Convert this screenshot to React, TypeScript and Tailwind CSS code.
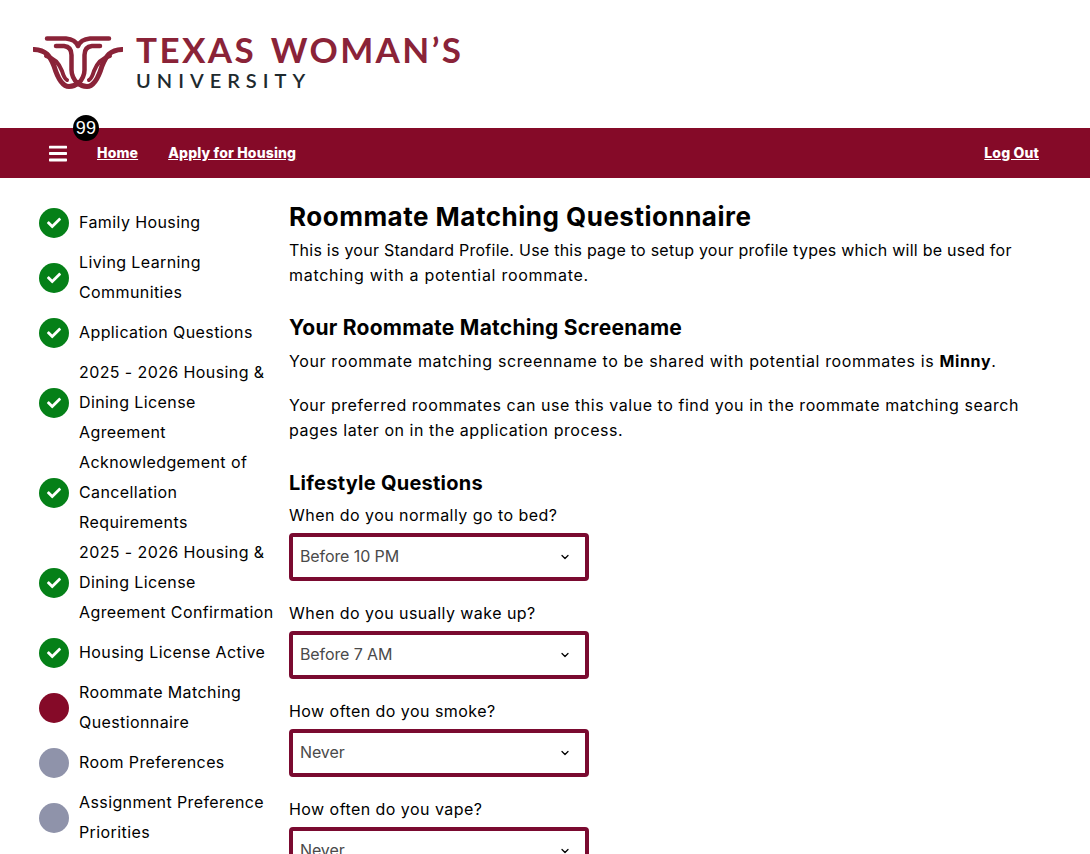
import { ChevronDown } from 'lucide-react';
import { FaBars, FaCheck } from 'react-icons/fa';

interface StepProps {
  label: string[];
  status: 'done' | 'current' | 'todo';
  gap?: boolean;
}

const steps: StepProps[] = [
  { label: ['Family Housing'], status: 'done', gap: true },
  { label: ['Living Learning', 'Communities'], status: 'done', gap: true },
  { label: ['Application Questions'], status: 'done', gap: true },
  { label: ['2025 - 2026 Housing &', 'Dining License', 'Agreement'], status: 'done' },
  { label: ['Acknowledgement of', 'Cancellation', 'Requirements'], status: 'done' },
  { label: ['2025 - 2026 Housing &', 'Dining License', 'Agreement Confirmation'], status: 'done', gap: true },
  { label: ['Housing License Active'], status: 'done', gap: true },
  { label: ['Roommate Matching', 'Questionnaire'], status: 'current', gap: true },
  { label: ['Room Preferences'], status: 'todo', gap: true },
  { label: ['Assignment Preference', 'Priorities'], status: 'todo' },
];

const questions = [
  { label: 'When do you normally go to bed?', value: 'Before 10 PM' },
  { label: 'When do you usually wake up?', value: 'Before 7 AM' },
  { label: 'How often do you smoke?', value: 'Never' },
  { label: 'How often do you vape?', value: 'Never' },
];

function LogoHalf() {
  return (
    <>
      <path d="M47 38.5H66C72 39 76 41 78 46" strokeWidth="4.5" />
      <path d="M56 46H64C69 46.5 71.5 50 71.5 55V70C71.5 76 74 80 78 84" strokeWidth="4.5" />
      <path d="M34 49.5C46 50 50 56 54 66C57 76 62 86.5 69 86.5C73 86.5 76 85 78 83" strokeWidth="5" />
      <path d="M46 56C54 58 59 63 62 71C63.5 76 65 79 67 80" strokeWidth="4" />
    </>
  );
}

function Logo() {
  return (
    <svg width="90" height="54" viewBox="33 36 90 54" fill="none" stroke="#8a2338" strokeLinecap="round" className="shrink-0">
      <LogoHalf />
      <g transform="translate(156 0) scale(-1 1)">
        <LogoHalf />
      </g>
    </svg>
  );
}

function StepDot({ status }: { status: StepProps['status'] }) {
  if (status === 'done') {
    return (
      <div className="w-[30px] h-[30px] rounded-full bg-[#058018] flex items-center justify-center shrink-0">
        <FaCheck className="w-[14px] h-[14px] text-white" />
      </div>
    );
  }
  return <div className={`w-[30px] h-[30px] rounded-full shrink-0 ${status === 'current' ? 'bg-[#850a28]' : 'bg-[#8f93aa]'}`} />;
}

export default function App() {
  return (
    <div className="h-[854px] overflow-hidden bg-white text-black font-['Inter',sans-serif] text-[16px]">
      <header className="h-[128px] pl-[33px] pt-[36px] flex items-start gap-[13px]">
        <Logo />
        <div className="font-['Lato',sans-serif]">
          <div className="text-[35px] leading-[26px] font-bold tracking-[2.4px] [word-spacing:4px] text-[#8a2338] whitespace-nowrap">TEXAS WOMAN’S</div>
          <div className="text-[20px] leading-[16px] font-semibold tracking-[6px] text-[#1e2a2e] mt-[10px]">UNIVERSITY</div>
        </div>
      </header>

      <nav className="relative h-[50px] bg-[#850a28] flex items-center pl-[49px] pr-[51px] pb-[2px] text-white font-extrabold text-[14px] tracking-[0.15px]">
        <FaBars className="w-[18px] h-[21px] mt-[2px]" />
        <span className="absolute left-[73px] -top-[13px] w-[26px] h-[26px] rounded-full bg-black flex items-center justify-center font-['Liberation_Sans',sans-serif] font-normal text-[18px]">99</span>
        <a className="underline ml-[30px]">Home</a>
        <a className="underline ml-[30px]">Apply for Housing</a>
        <a className="underline ml-auto">Log Out</a>
      </nav>

      <div className="flex pt-[30px] pl-[39px]">
        <aside className="w-[250px] shrink-0 flex flex-col">
          {steps.map((step) => (
            <div key={step.label[0] + step.label[1]} className={`flex items-center gap-[10px] ${step.gap ? 'mb-[10px]' : ''}`}>
              <StepDot status={step.status} />
              <div className="whitespace-nowrap tracking-[0.4px]">
                {step.label.map((line) => (
                  <div key={line} className="h-[30px] leading-[28px]">{line}</div>
                ))}
              </div>
            </div>
          ))}
        </aside>

        <main className="flex-1 pr-[40px] tracking-[0.45px] leading-[25px]">
          <h1 className="text-[26px] leading-[38px] font-bold tracking-[0.5px] -mt-[10px]">Roommate Matching Questionnaire</h1>
          <p className="mt-[2px]">
            <span className="tracking-[0.25px]">This is your Standard Profile. Use this page to setup your profile types which will be used for</span>
            <br />
            <span className="tracking-[0.72px]">matching with a potential roommate.</span>
          </p>
          <h2 className="text-[21px] leading-[30px] font-bold tracking-[0.25px] mt-[25px]">Your Roommate Matching Screename</h2>
          <p className="mt-[6px] tracking-[0.63px]">Your roommate matching screenname to be shared with potential roommates is <b>Minny</b>.</p>
          <p className="mt-[19px] tracking-[0.55px]">Your preferred roommates can use this value to find you in the roommate matching search<br />pages later on in the application process.</p>
          <h2 className="text-[20px] leading-[30px] font-bold tracking-[0.26px] mt-[25px]">Lifestyle Questions</h2>
          <div className="mt-[5px] flex flex-col gap-[20px]">
            {questions.map((q) => (
              <label key={q.label} className="block">
                <span className="block h-[25px]">{q.label}</span>
                <span className="relative block w-[300px] mt-[5px]">
                  <select defaultValue={q.value} className="appearance-none w-full h-[48px] border-4 border-[#7a0a30] rounded-[4px] bg-white pl-[7px] pb-[2px] text-[#4a4a4a] tracking-[-0.1px]">
                    <option>{q.value}</option>
                  </select>
                  <ChevronDown className="absolute right-[18px] top-[18px] w-3 h-3 text-black" strokeWidth={2.5} />
                </span>
              </label>
            ))}
          </div>
        </main>
      </div>
    </div>
  );
}
